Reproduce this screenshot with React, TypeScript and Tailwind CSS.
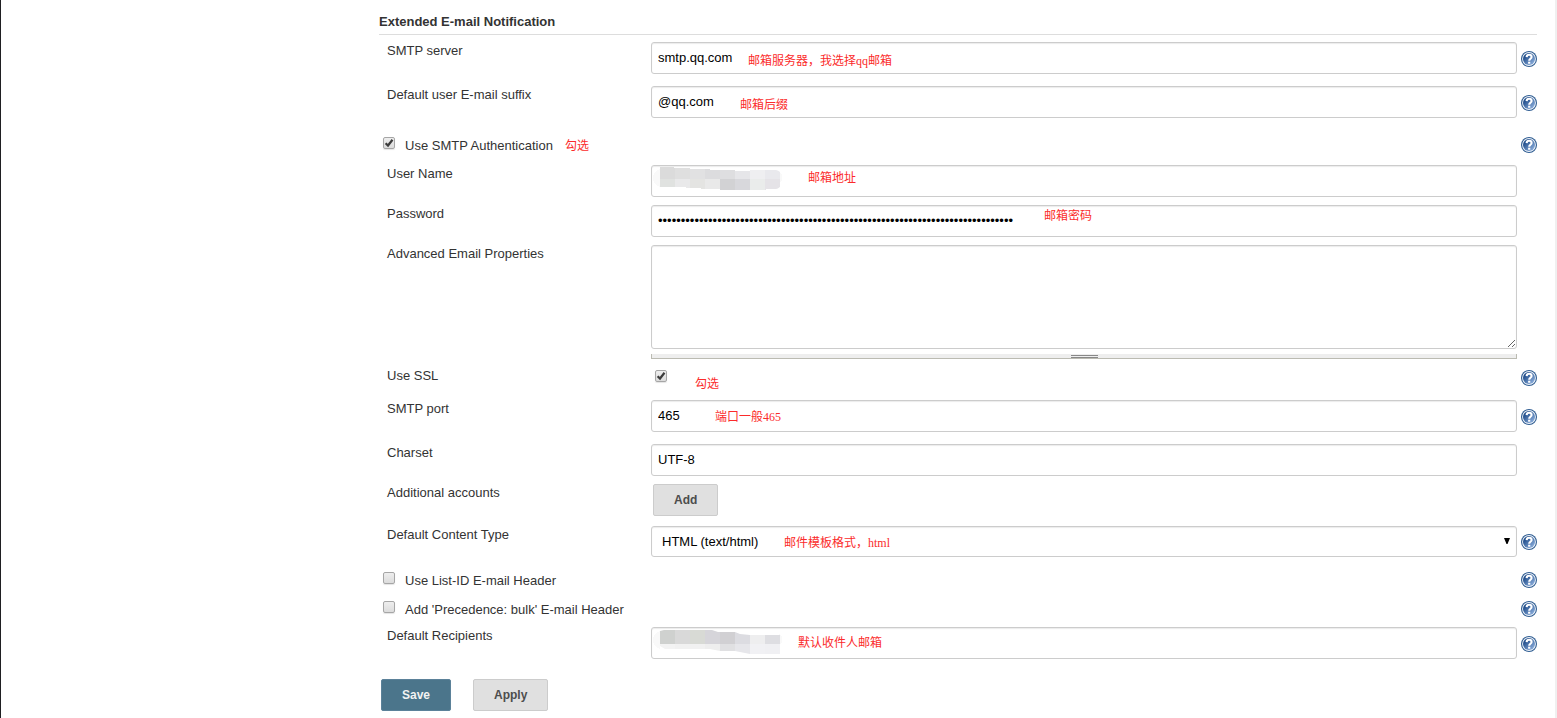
import { useId, type ReactNode } from "react";

function HelpIcon() {
  const id = useId();
  return (
    <svg viewBox="0 0 16 16" className="size-4" aria-hidden="true">
      <defs>
        <linearGradient id={id} x1="0" y1="0" x2="1" y2="1">
          <stop offset="0.2" stopColor="#1f4c8a" />
          <stop offset="0.85" stopColor="#86a9d8" />
        </linearGradient>
      </defs>
      <circle cx="8" cy="8" r="8" fill="#2f5d92" />
      <circle cx="8" cy="8" r="6.9" fill="#f2f6fb" />
      <circle cx="8" cy="8" r="6" fill={`url(#${id})`} />
      <path
        d="M5.6 6.1C5.7 4.500 6.700 3.800 8.100 3.800c1.500 0 2.500.9 2.500 2.100 0 1.800-2.400 1.900-2.400 3.800"
        fill="none"
        stroke="#fff"
        strokeWidth="2.100"
      />
      <rect x="7.100" y="10.700" width="2.200" height="2" fill="#fff" />
    </svg>
  );
}

function Help({ topic, className = "mt-[9px]" }: { topic: string; className?: string }) {
  return (
    <a href="#help" aria-label={`Help for ${topic}`} className={`ml-1 block size-4 shrink-0 ${className}`}>
      <HelpIcon />
    </a>
  );
}

function Note({ children, className = "" }: { children: ReactNode; className?: string }) {
  return (
    <span
      className={`pointer-events-none text-xs leading-4 whitespace-nowrap text-[#fb2b2b] [font-family:'Liberation_Serif','Noto_Sans_CJK_SC',sans-serif] ${className}`}
    >
      {children}
    </span>
  );
}

function Checkbox({ id, defaultChecked = false }: { id: string; defaultChecked?: boolean }) {
  return (
    <span className="relative block size-3 shrink-0">
      <input
        id={id}
        type="checkbox"
        defaultChecked={defaultChecked}
        className="peer block size-3 appearance-none rounded-xs border border-[#a6a6a6] bg-linear-to-b from-[#eeeeee] to-[#dcdcdc] shadow-[0_1px_1px_#e4e4e4]"
      />
      <svg
        viewBox="0 0 12 12"
        className="pointer-events-none absolute inset-0 hidden size-3 peer-checked:block"
        aria-hidden="true"
      >
        <path d="M2.600 6.200 5 8.500 9.500 2.800" fill="none" stroke="#3c3c3c" strokeWidth="2.200" />
      </svg>
    </span>
  );
}

function Row({
  id,
  label,
  help,
  helpClass,
  className = "pb-2",
  children,
}: {
  id: string;
  label: string;
  help?: boolean;
  helpClass?: string;
  className?: string;
  children: ReactNode;
}) {
  return (
    <div className={`flex items-start ${className}`}>
      <label htmlFor={id} className="w-[272px] shrink-0 pt-px pl-2">
        {label}
      </label>
      <div className="relative min-w-0 flex-1">{children}</div>
      {help ? <Help topic={label} className={helpClass} /> : <span className="ml-1 w-4 shrink-0" />}
    </div>
  );
}

function CheckRow({
  id,
  label,
  defaultChecked,
  note,
}: {
  id: string;
  label: string;
  defaultChecked?: boolean;
  note?: string;
}) {
  return (
    <div className="flex h-[29px] items-center pl-1">
      <div className="-mt-1">
        <Checkbox id={id} defaultChecked={defaultChecked} />
      </div>
      <label htmlFor={id} className="pt-0.5 pl-[10px]">
        {label}
      </label>
      {note && <Note className="ml-3 pt-0.5">{note}</Note>}
      <div className="flex-1" />
      <Help topic={label} className="" />
    </div>
  );
}

const field =
  "block w-full rounded-[3px] border border-[#cccccc] bg-white text-black shadow-[inset_0_1px_1px_#ececec] outline-none";
const textField = `${field} h-8 px-1.5 pb-0.5`;
const button = "h-8 rounded-xs border text-xs font-bold";

const userMosaic = [
  ["#dbdbdb", "#dfdfdf", "#e1e1e2", "#dcdcde", "#dedee0", "#e6e6e9", "#efeff1", "#e9e9ed"],
  ["#e0e2e0", "#e9e9ea", "#e4e4e2", "#e9e9e9", "#d2d2d4", "#d8d8dc", "#eaeceb", "#e5e3e7"],
];
const recipientMosaic = [
  ["#cfd1cf", "#d9d9d9", "#d8dad5", "#d6d5da", "#d1d0d3", "#dcdce1", "#eeeeef", "#dedee2"],
  ["#f3f3f3", "#f1f1f1", "#f1f1f1", "#eeeeee", "#e0e0e2", "#e6e6ea", "#f1f1f4", "#f0f0f3"],
];

function Mosaic({ cells, outline, split }: { cells: string[][]; outline: string; split: number }) {
  const id = useId();
  return (
    <svg
      viewBox="0 0 134 28"
      className="pointer-events-none absolute top-0.5 left-0.5 h-7 w-[134px]"
      shapeRendering="crispEdges"
      aria-hidden="true"
    >
      <clipPath id={id}>
        <path d={outline} />
      </clipPath>
      <path d="M7 2Q0 5 0 11t7 9zM126 5l3 2q1 4 0 6l-3 3z" fill="#f9f9f9" />
      <g clipPath={`url(#${id})`}>
        {cells.map((row, r) =>
          row.map((color, c) => (
            <rect
              key={`${r}-${c}`}
              x={7 + c * 15}
              y={r === 0 ? 0 : split}
              width="15"
              height={r === 0 ? split : 28 - split}
              fill={color}
            />
          )),
        )}
      </g>
    </svg>
  );
}

export default function App() {
  return (
    <div className="flex min-h-screen border-l border-[#1f1f22] bg-white [font-family:'Liberation_Sans',Arial,sans-serif] text-[13px] leading-4 text-[#333333]">
      <div className="w-[378px] shrink-0" />
      <main className="min-w-0 flex-1 pt-3.5 pr-[18px]">
        <form onSubmit={(e) => e.preventDefault()}>
          <h2 className="mb-[7px] border-b border-[#dddddd] pb-1 font-bold">Extended E-mail Notification</h2>

          <Row id="server" label="SMTP server" help className="pb-3">
            <input id="server" type="text" defaultValue="smtp.qq.com" className={textField} />
            <Note className="absolute top-[11px] left-[97px]">邮箱服务器，我选择qq邮箱</Note>
          </Row>
          <Row id="suffix" label="Default user E-mail suffix" help className="pb-3">
            <input id="suffix" type="text" defaultValue="@qq.com" className={textField} />
            <Note className="absolute top-[11px] left-[89px]">邮箱后缀</Note>
          </Row>
          <div className="pb-1.5">
            <CheckRow id="auth" label="Use SMTP Authentication" defaultChecked note="勾选" />
          </div>
          <Row id="user" label="User Name">
            <input id="user" type="text" className={textField} />
            <Mosaic
              cells={userMosaic}
              split={12}
              outline="M9 0h12v1h16v1h20v1h25v1h15v-1h26q5 1 5 5v10q-1 3-5 4h-10v1h-46v-1h-19v-1h-15v-1h-26l-4-4V0z"
            />
            <Note className="absolute top-[5px] left-[157px]">邮箱地址</Note>
          </Row>
          <Row id="password" label="Password">
            <input id="password" type="password" defaultValue={"x".repeat(78)} className={textField} />
            <Note className="absolute top-[3px] left-[393px]">邮箱密码</Note>
          </Row>
          <Row id="advanced" label="Advanced Email Properties">
            <textarea id="advanced" className={`${field} h-[104px] resize p-1.5`} />
            <div className="mt-[5px] flex h-[5px] justify-center border border-t-0 border-[#bbbbb2] bg-[#eeeeee]">
              <div className="mt-px h-[3px] w-[27px] border-y border-[#888888]" />
            </div>
          </Row>
          <Row id="ssl" label="Use SSL" help helpClass="mt-[3px]" className="pb-2">
            <div className="flex h-[25px] items-start pt-[3px] pl-1">
              <Checkbox id="ssl" defaultChecked />
              <Note className="mt-1.5 ml-7">勾选</Note>
            </div>
          </Row>
          <Row id="port" label="SMTP port" help className="pb-3">
            <input id="port" type="text" defaultValue="465" className={textField} />
            <Note className="absolute top-[9px] left-16">端口一般465</Note>
          </Row>
          <Row id="charset" label="Charset">
            <input id="charset" type="text" defaultValue="UTF-8" className={textField} />
          </Row>
          <Row id="accounts" label="Additional accounts" className="pb-2.5">
            <button
              id="accounts"
              type="button"
              className={`${button} ml-0.5 block border-[#cccccc] bg-[#e0e0e0] px-5 text-[#4d4d4d]`}
            >
              Add
            </button>
          </Row>
          <Row id="type" label="Default Content Type" help helpClass="mt-2">
            <select id="type" className={`${field} h-[31px] appearance-none px-2.5`}>
              <option>HTML (text/html)</option>
            </select>
            <Note className="absolute top-[9px] left-[133px]">邮件模板格式，html</Note>
            <svg
              viewBox="0 0 6 6"
              className="pointer-events-none absolute top-3 right-[7px] size-1.5"
              aria-hidden="true"
            >
              <path d="M0 0h6L3.500 6h-1z" fill="#000" />
            </svg>
          </Row>
          <div className="pb-1">
            <CheckRow id="listid" label="Use List-ID E-mail Header" />
            <CheckRow id="bulk" label="Add 'Precedence: bulk' E-mail Header" />
          </div>
          <Row id="recipients" label="Default Recipients" help className="pb-5">
            <input id="recipients" type="text" className={textField} />
            <Mosaic
              cells={recipientMosaic}
              split={15}
              outline="M7 2l4-1h48l6 2h17l5 2l10 1h30v19h-30l-15-3h-15l-10-2h-45l-5-3z"
            />
            <Note className="absolute top-2 left-[147px]">默认收件人邮箱</Note>
          </Row>

          <div className="flex gap-[22px] pb-[7px] pl-0.5">
            <button type="submit" className={`${button} border-[#5b8199] bg-[#4b758b] px-5 text-[#f2f2f2]`}>
              Save
            </button>
            <button type="button" className={`${button} border-[#cccccc] bg-[#e0e0e0] px-5 text-[#4d4d4d]`}>
              Apply
            </button>
          </div>
        </form>
      </main>
      <div className="w-0.5 shrink-0 bg-[#f0f0f0]" />
    </div>
  );
}
